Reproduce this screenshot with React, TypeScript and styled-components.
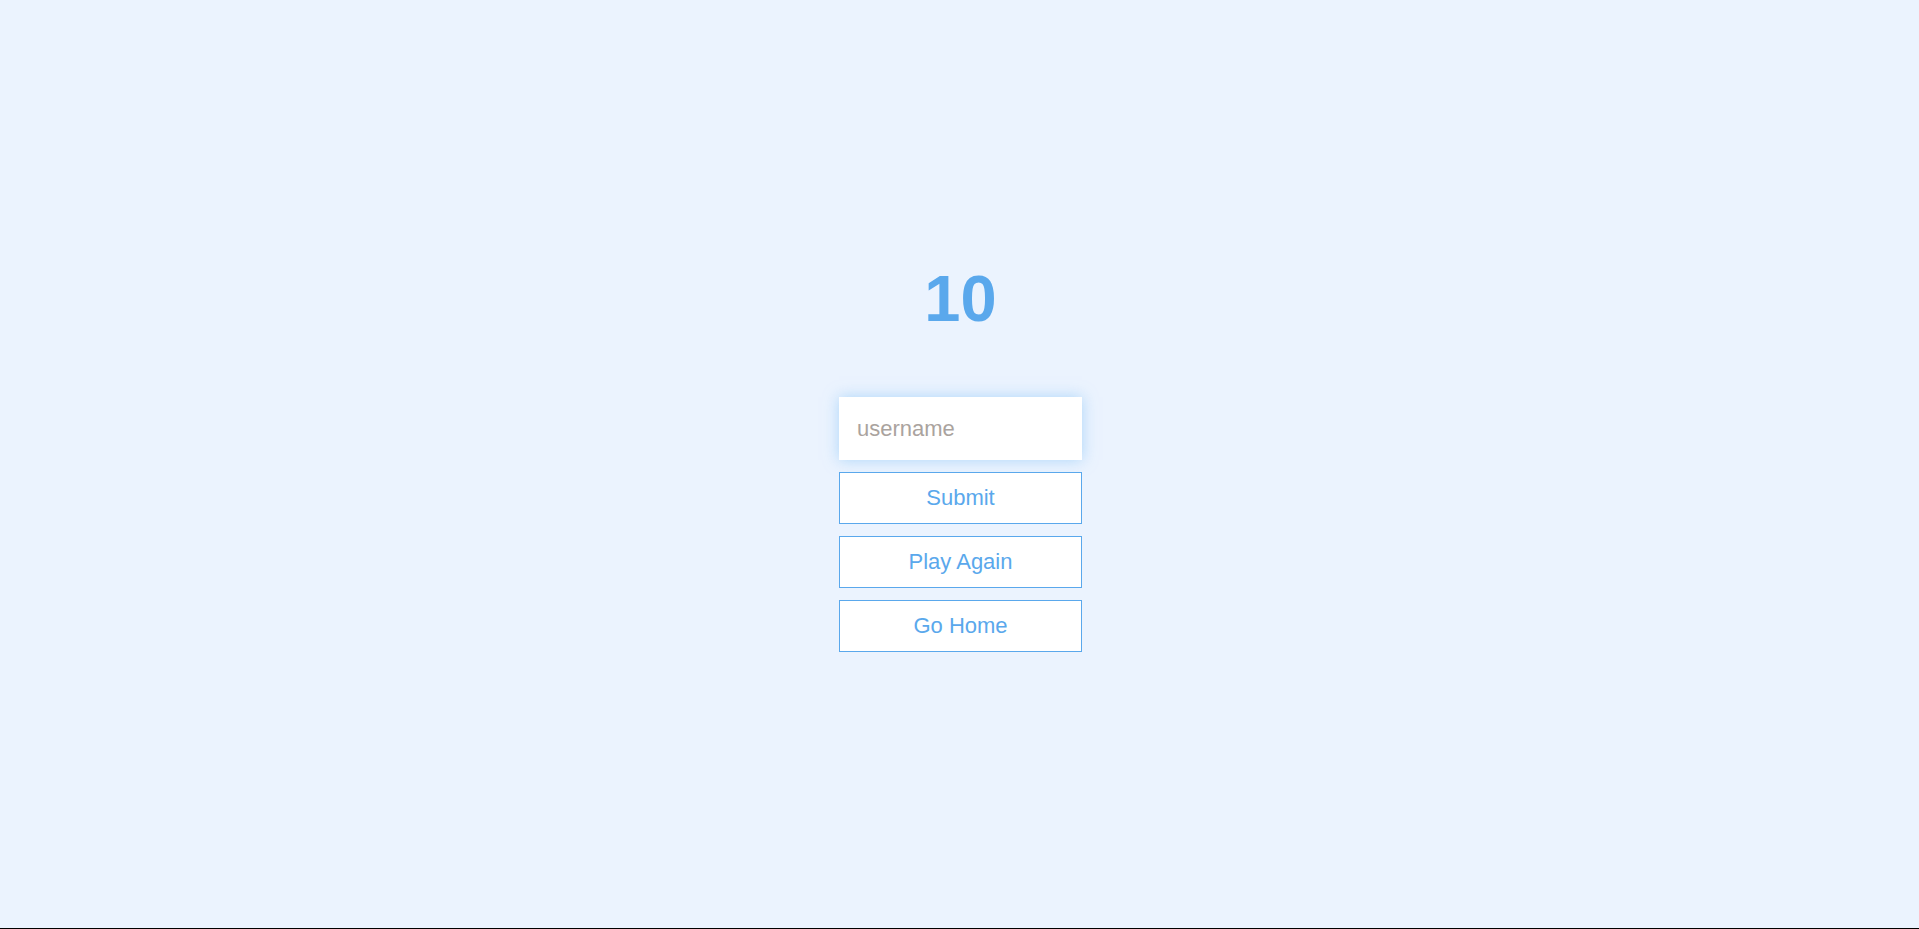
import React, { useState } from 'react';
import styled, { createGlobalStyle } from 'styled-components';

const GlobalStyle = createGlobalStyle`
  html, body {
    margin: 0;
    padding: 0;
    background: #ebf3fe;
  }
  * {
    box-sizing: border-box;
  }
`;

const Page = styled.div`
  display: flex;
  flex-direction: column;
  align-items: center;
  justify-content: center;
  height: 929px;
  padding: 0 0 16px 2px;
  background: #ebf3fe;
  border-bottom: 1px solid #000;
  font-family: 'Liberation Sans', Arial, sans-serif;
`;

const Score = styled.h1`
  margin: 0 0 60px;
  font-size: 65px;
  line-height: 77px;
  font-weight: 700;
  color: #5aa8ec;
`;

const Form = styled.div`
  display: flex;
  flex-direction: column;
  gap: 12px;
  width: 243px;
`;

const NameInput = styled.input`
  height: 63px;
  width: 100%;
  padding: 0 18px;
  border: none;
  outline: none;
  background: #fff;
  font-family: inherit;
  font-size: 22px;
  color: #444;
  box-shadow: 0 0 14px rgba(120, 190, 245, 0.55);

  &::placeholder {
    color: #aaa39e;
  }
`;

const Button = styled.button`
  height: 52px;
  width: 100%;
  background: #fff;
  border: 1px solid #5aa8ec;
  color: #5aa8ec;
  font-family: inherit;
  font-size: 22px;
  cursor: pointer;
`;

export default function App() {
  const [name, setName] = useState('');

  return (
    <>
      <GlobalStyle />
      <Page>
        <Score>10</Score>
        <Form>
          <NameInput
            placeholder='username'
            value={name}
            onChange={e => setName(e.target.value)}
          />
          <Button>Submit</Button>
          <Button>Play Again</Button>
          <Button>Go Home</Button>
        </Form>
      </Page>
    </>
  );
}
